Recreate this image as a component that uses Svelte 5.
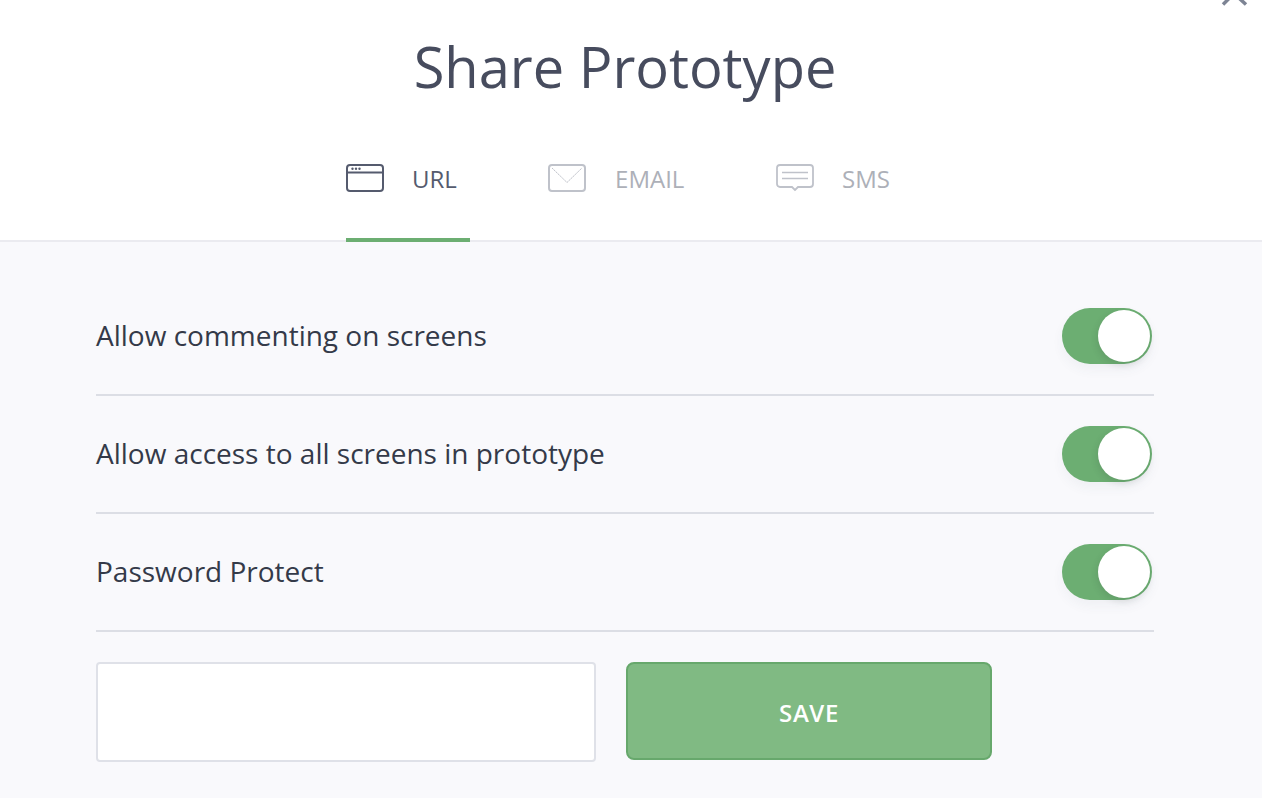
<script>
  const rows = [
    'Allow commenting on screens',
    'Allow access to all screens in prototype',
    'Password Protect'
  ];
</script>

<div class="page">
  <svg class="close" viewBox="0 0 28 12" width="28" height="12" aria-hidden="true">
    <path d="M2 4.500L13 -6.500L25 4.500" />
  </svg>
  <header class="head">
    <h1>Share Prototype</h1>
    <nav class="tabs">
      <div class="tab active">
        <svg viewBox="0 0 38 28" width="38" height="28" aria-hidden="true">
          <rect x="1" y="1" width="36" height="26" rx="3" fill="none" stroke="#555b6e" stroke-width="2" />
          <path d="M1 8.500H37" stroke="#555b6e" stroke-width="2" fill="none" />
          <circle cx="6.500" cy="4.800" r="1.200" fill="#555b6e" />
          <circle cx="10" cy="4.800" r="1.200" fill="#555b6e" />
          <circle cx="13.500" cy="4.800" r="1.200" fill="#555b6e" />
        </svg>
        <span>URL</span>
      </div>
      <div class="tab">
        <svg viewBox="0 0 38 28" width="38" height="28" aria-hidden="true">
          <rect x="1" y="1" width="36" height="26" rx="3" fill="none" stroke="#bfc2ca" stroke-width="2" />
          <path d="M4 4L19 18.500L34 4" stroke="#bfc2ca" stroke-width="1" stroke-dasharray="2 0.600" fill="none" />
        </svg>
        <span class="email">EMAIL</span>
      </div>
      <div class="tab">
        <svg viewBox="0 0 38 28" width="38" height="28" aria-hidden="true">
          <path d="M4 1H34A3 3 0 0 1 37 4V20A3 3 0 0 1 34 23H22L19 26L16 23H4A3 3 0 0 1 1 20V4A3 3 0 0 1 4 1Z" fill="none" stroke="#bfc2ca" stroke-width="1.800" />
          <path d="M6 8.500H32M6 14.500H32" stroke="#bfc2ca" stroke-width="1.600" fill="none" />
        </svg>
        <span>SMS</span>
      </div>
    </nav>
  </header>

  <main class="body">
    {#each rows as r}
      <div class="row">
        <span class="label">{r}</span>
        <span class="toggle"><span class="knob"></span></span>
      </div>
    {/each}
    <div class="form">
      <input class="pw" type="text" aria-label="Password" />
      <button class="save">SAVE</button>
    </div>
  </main>
</div>

<style>
  :global(body) {
    margin: 0;
    background: #f9f9fc;
  }
  .page {
    position: relative;
    height: 798px;
    overflow: hidden;
    display: flex;
    flex-direction: column;
    font-family: "Open Sans", sans-serif;
  }
  .close {
    position: absolute;
    top: 0;
    left: 1221px;
  }
  .close path {
    stroke: #7d8494;
    stroke-width: 3.500;
    fill: none;
  }
  .head {
    background: #fff;
    height: 240px;
    padding-right: 12px;
    border-bottom: 2px solid #ebebf0;
    display: flex;
    flex-direction: column;
    align-items: center;
  }
  h1 {
    margin: 28px 0 0;
    font-size: 56px;
    line-height: 76px;
    font-weight: 400;
    color: #474c5e;
  }
  .tabs {
    display: flex;
    gap: 78px;
    margin-top: 60px;
  }
  .tab {
    display: flex;
    align-items: flex-start;
    gap: 28px;
    width: 124px;
    height: 78px;
    margin-bottom: -2px;
    box-sizing: border-box;
    border-bottom: 4px solid transparent;
    font-size: 24px;
    line-height: 32px;
    color: #adb0b8;
  }
  .tab svg {
    flex: none;
  }
  .tab span {
    margin-top: -1px;
  }
  .tab span.email {
    margin-left: 1px;
  }
  .tab.active {
    color: #555b6e;
    border-bottom-color: #6cae72;
  }
  .tab:nth-child(2) {
    width: 150px;
  }
  .tab:nth-child(3) {
    width: auto;
    padding-right: 14px;
  }
  .body {
    flex: 1;
    padding: 36px 108px 0 96px;
  }
  .row {
    height: 116px;
    border-bottom: 2px solid #dcdee5;
    display: flex;
    align-items: center;
    justify-content: space-between;
  }
  .label {
    font-size: 28px;
    color: #343a49;
    margin-top: -2px;
  }
  .toggle {
    position: relative;
    width: 90px;
    height: 56px;
    margin-right: 2px;
    border-radius: 28px;
    background: #6cae72;
    box-shadow: 0 6px 12px rgba(60, 70, 90, 0.05);
  }
  .knob {
    position: absolute;
    top: 2px;
    right: 2px;
    width: 52px;
    height: 52px;
    border-radius: 50%;
    background: #fff;
    box-shadow: -1px 3px 7px rgba(40, 60, 50, 0.14);
  }
  .form {
    display: flex;
    align-items: flex-start;
    gap: 30px;
    margin-top: 30px;
  }
  .pw {
    width: 500px;
    height: 100px;
    box-sizing: border-box;
    background: #fff;
    border: 2px solid #dfe1e8;
    border-radius: 4px;
    padding: 0;
    outline: none;
  }
  .save {
    width: 366px;
    height: 98px;
    box-sizing: border-box;
    background: #80ba83;
    border: 2px solid #67a86c;
    border-radius: 8px;
    color: #fff;
    font-family: inherit;
    font-size: 24px;
    font-weight: 600;
    letter-spacing: 0.600px;
    padding: 2px 0 0;
  }
</style>
